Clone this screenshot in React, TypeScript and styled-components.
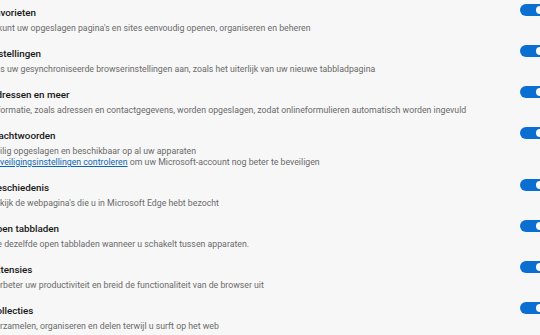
import React from 'react';
import styled, { createGlobalStyle } from 'styled-components';

const GlobalStyle = createGlobalStyle`
    html, body {
        margin: 0;
        padding: 0;
        background: #f7f7f7;
        overflow: hidden;
    }
`

const Page = styled.div`
    width: 540px;
    height: 335px;
    overflow: hidden;
    background: #f7f7f7;
    font-family: Roboto, "Noto Sans", sans-serif;
`

const List = styled.div`
    display: flex;
    flex-flow: column;
    margin: 0 -6px 0 -10px;
    padding-top: 5px;
`

const Row = styled.div`
    display: flex;
    justify-content: space-between;
    align-items: flex-start;
    padding-bottom: 12px;
`

const TextHolder = styled.div`
    display: flex;
    flex-flow: column;
    white-space: nowrap;
`

const Title = styled.div`
    font-size: 9.8px;
    font-weight: 500;
    line-height: 16px;
    color: #161616;
`

const Desc = styled.div`
    font-size: 8.75px;
    line-height: 12px;
    color: #6a6a6a;
    margin-top: 1px;

    & + & {
        margin-top: -1px;
    }
`

const Link = styled.a`
    color: #0b66b5;
    text-decoration: underline;
    text-underline-offset: 1px;
`

const Toggle = styled.div<{ on: boolean }>`
    position: relative;
    flex: none;
    width: 26px;
    height: 12px;
    margin-top: -1px;
    border-radius: 6px;
    background: ${p => (p.on ? '#0a6fd0' : '#999')};

    &::after {
        content: '';
        position: absolute;
        top: 2px;
        right: ${p => (p.on ? '2px' : '16px')};
        width: 8px;
        height: 8px;
        border-radius: 50%;
        background: #fff;
    }
`

type Item = {
    title: string;
    lines: React.ReactNode[];
}

const items: Item[] = [
    {
        title: 'Favorieten',
        lines: ["U kunt uw opgeslagen pagina's en sites eenvoudig openen, organiseren en beheren"],
    },
    {
        title: 'Instellingen',
        lines: ['Pas uw gesynchroniseerde browserinstellingen aan, zoals het uiterlijk van uw nieuwe tabbladpagina'],
    },
    {
        title: 'Adressen en meer',
        lines: ['Informatie, zoals adressen en contactgegevens, worden opgeslagen, zodat onlineformulieren automatisch worden ingevuld'],
    },
    {
        title: 'Wachtwoorden',
        lines: [
            'Veilig opgeslagen en beschikbaar op al uw apparaten',
            <><Link>Beveiligingsinstellingen controleren</Link> om uw Microsoft-account nog beter te beveiligen</>,
        ],
    },
    {
        title: 'Geschiedenis',
        lines: ["Bekijk de webpagina's die u in Microsoft Edge hebt bezocht"],
    },
    {
        title: 'Open tabbladen',
        lines: ['Zie dezelfde open tabbladen wanneer u schakelt tussen apparaten.'],
    },
    {
        title: 'Extensies',
        lines: ['Verbeter uw productiviteit en breid de functionaliteit van de browser uit'],
    },
    {
        title: 'Collecties',
        lines: ['Verzamelen, organiseren en delen terwijl u surft op het web'],
    },
]

function App() {
    return (
        <Page>
            <GlobalStyle />
            <List>
                {items.map(item => (
                    <Row key={item.title}>
                        <TextHolder>
                            <Title>{item.title}</Title>
                            {item.lines.map((line, i) => (
                                <Desc key={i}>{line}</Desc>
                            ))}
                        </TextHolder>
                        <Toggle on />
                    </Row>
                ))}
            </List>
        </Page>
    )
}

export default App
